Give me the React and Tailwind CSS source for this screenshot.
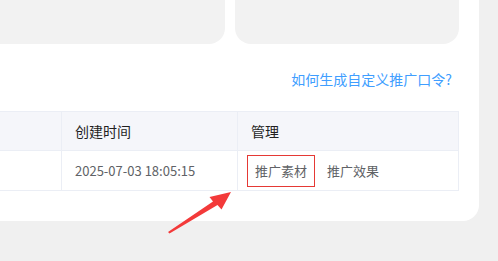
import React from 'react';

// Bloc "推广口令" — tableau avec flèche d'annotation
function App() {
  return (
    <div
      className="relative w-[498px] h-[261px] overflow-hidden bg-[#f0f0f0]"
      style={{ fontFamily: '"Noto Sans CJK SC", "Noto Sans", sans-serif' }}
    >
      {/* Carte blanche */}
      <div className="w-[479px] h-[221px] bg-white rounded-br-[16px]">
        {/* Les deux encarts gris du haut */}
        <div className="flex gap-[10px] h-[44px]">
          <div className="w-[225px] bg-[#f2f2f2] rounded-br-[16px]" />
          <div className="w-[224px] bg-[#f2f2f2] rounded-b-[16px]" />
        </div>

        {/* Lien d'aide */}
        <div className="flex justify-end w-[452px] h-[67px] pt-[25px]">
          <span className="text-[14px] leading-[20px] text-[#409eff]">如何生成自定义推广口令?</span>
        </div>

        {/* Tableau */}
        <div className="w-[459px] border-t border-b border-r border-[#ebeef5]">
          <div className="flex h-[39px] bg-[#f5f6fa] border-b border-[#ebeef5] text-[14px] text-[#1f1f1f]">
            <div className="w-[62px] border-r border-[#ebeef5]" />
            <div className="w-[176px] border-r border-[#ebeef5] flex items-center pl-[13px]">创建时间</div>
            <div className="flex-1 flex items-center pl-[13px]">管理</div>
          </div>
          <div className="flex h-[39px] text-[13px] text-[#606266]">
            <div className="w-[62px] border-r border-[#ebeef5]" />
            <div className="w-[176px] border-r border-[#ebeef5] flex items-center pl-[13px]">2025-07-03 18:05:15</div>
            <div className="flex-1 flex items-center pl-[9px] gap-[12px]">
              <span className="h-[32px] px-[7px] flex items-center border border-[#e53935]">推广素材</span>
              <span>推广效果</span>
            </div>
          </div>
        </div>
      </div>

      {/* Flèche rouge */}
      <svg className="absolute left-0 top-0" width="498" height="261" viewBox="0 0 498 261">
        <polygon
          points="168,232 213,201.5 209.5,197 231,192 221.5,209.5 217.5,205 169.5,233.5"
          fill="#f33a3a"
        />
      </svg>
    </div>
  );
}

export default App;
